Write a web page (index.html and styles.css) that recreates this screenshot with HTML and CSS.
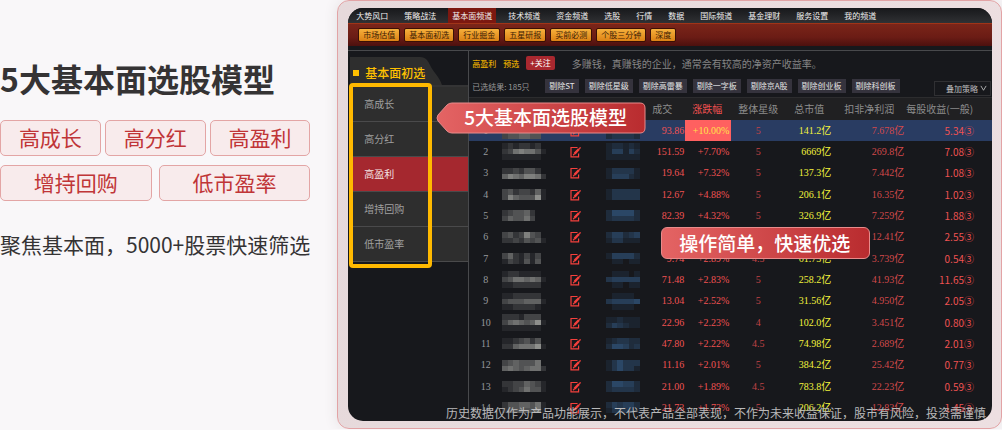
FILE: index.html
```html
<!DOCTYPE html>
<html lang="zh-CN">
<head>
<meta charset="utf-8">
<title>5大基本面选股模型</title>
<link rel="stylesheet" href="styles.css">
</head>
<body>
<main class="page">
  <section class="intro">
    <h1 class="intro-title">5大基本面选股模型</h1>
    <ul class="tags">
      <li class="tag">高成长</li>
      <li class="tag">高分红</li>
      <li class="tag">高盈利</li>
    </ul>
    <ul class="tags tags-wide">
      <li class="tag">增持回购</li>
      <li class="tag">低市盈率</li>
    </ul>
    <p class="intro-text">聚焦基本面，5000+股票快速筛选</p>
  </section>

  <section class="frame">
    <div class="app">
      <nav class="topnav">
        <a href="#">大势风口</a>
        <a href="#">策略战法</a>
        <a href="#" class="current">基本面频道</a>
        <a href="#">技术频道</a>
        <a href="#">资金频道</a>
        <a href="#">选股</a>
        <a href="#">行情</a>
        <a href="#">数据</a>
        <a href="#">国际频道</a>
        <a href="#">基金理财</a>
        <a href="#">服务设置</a>
        <a href="#">我的频道</a>
      </nav>
      <div class="subnav">
        <button>市场估值</button>
        <button>基本面初选</button>
        <button>行业掘金</button>
        <button>五星研报</button>
        <button>买前必测</button>
        <button>个股三分钟</button>
        <button>深度</button>
      </div>
      <div class="workspace">
        <aside class="sidebar">
          <div class="side-head">
            <svg class="side-tab" viewBox="0 0 92 28" aria-hidden="true"><path d="M0 0H70C76 0 78 4 80 8C83 15 89 19 92 28H0Z"/></svg>
            <span class="side-title">基本面初选</span>
          </div>
          <ul class="side-list">
            <li><a href="#">高成长</a></li>
            <li><a href="#">高分红</a></li>
            <li><a href="#" class="current">高盈利</a></li>
            <li><a href="#">增持回购</a></li>
            <li><a href="#">低市盈率</a></li>
          </ul>
        </aside>
        <div class="results">
          <div class="strategy">
            <strong>高盈利</strong>
            <strong>预选</strong>
            <button class="follow">+关注</button>
            <span class="desc">多赚钱，真赚钱的企业，通常会有较高的净资产收益率。</span>
          </div>
          <div class="filters">
            <span class="count">已选结果: 185只</span>
            <button>剔除ST</button>
            <button>剔除低星级</button>
            <button>剔除高雷暴</button>
            <button>剔除一字板</button>
            <button>剔除京A股</button>
            <button>剔除创业板</button>
            <button>剔除科创板</button>
            <button class="overlay-btn">叠加策略<svg viewBox="0 0 8 8" aria-hidden="true"><path d="M1 1L4 6L7 1"/></svg></button>
          </div>
          <table class="stocks">
            <colgroup>
              <col class="c-num"><col class="c-name"><col class="c-edit"><col class="c-tag"><col class="c-price"><col class="c-change"><col class="c-star"><col class="c-value"><col class="c-profit"><col class="c-eps">
            </colgroup>
            <thead>
              <tr><th></th><th></th><th></th><th></th><th class="h-price">成交</th><th class="h-change">涨跌幅</th><th class="h-star">整体星级</th><th class="h-value">总市值</th><th class="h-profit">扣非净利润</th><th class="h-eps">每股收益(一般)</th></tr>
            </thead>
            <tbody id="rows"></tbody>
          </table>
        </div>
      </div>
      <p class="disclaimer">历史数据仅作为产品功能展示，不代表产品全部表现，不作为未来收益保证，股市有风险，投资需谨慎</p>
      <div class="callout callout-models">
        <svg viewBox="0 0 210 32" preserveAspectRatio="none" aria-hidden="true">
          <defs><linearGradient id="red"><stop offset="0" stop-color="#e46464"/><stop offset="1" stop-color="#b92c2f"/></linearGradient></defs>
          <path d="M16 1Q13 1 11 3L2 13Q0 16 2 19L11 29Q13 31 16 31H204Q209 31 209 26V6Q209 1 204 1Z" fill="url(#red)" stroke="#e88b8b"/>
        </svg>
        <span>5大基本面选股模型</span>
      </div>
      <div class="callout callout-easy"><span>操作简单，快速优选</span></div>
    </div>
  </section>
</main>
<script src="rows.js"></script>
</body>
</html>
```
FILE: styles.css
```css
*, *::before, *::after { box-sizing: border-box; }
body {
  margin: 0;
  background: #f9f7f9;
  font-family: "Noto Sans CJK SC", sans-serif;
  color: #353334;
}
ul { list-style: none; margin: 0; padding: 0; }
p, h1 { margin: 0; }
a { color: inherit; text-decoration: none; }
button { font: inherit; color: inherit; border: 0; padding: 0; margin: 0; white-space: nowrap; }

.page { display: flex; align-items: flex-start; }
.intro { flex: 0 0 337px; padding: 58px 27px 0 0; }
.intro-title { font-size: 32px; line-height: 40px; font-weight: 700; white-space: nowrap; }
.tags { display: flex; gap: 4px; margin-top: 22px; }
.tags-wide { gap: 7px; margin-top: 9px; }
.tag {
  flex: 1;
  height: 36px;
  border: 1px solid #e3a5a5;
  border-radius: 5px;
  background: #f8ebec;
  color: #c03537;
  font-size: 21px;
  line-height: 32px;
  text-align: center;
}
.intro-text { margin-top: 28px; font-size: 21px; line-height: 30px; white-space: nowrap; }

.frame {
  flex: 1;
  min-width: 0;
  padding: 7px 9px 7px 10px;
  border: 1px solid #e2a3a5;
  border-radius: 12px;
  background: linear-gradient(100deg, #e6d9db, #eddfe1);
  box-shadow: 0 0 14px #e4e0e2;
}
.app {
  position: relative;
  overflow: hidden;
  padding-bottom: 3px;
  border-radius: 15px;
  background: #17181c;
  color: #999;
  font-size: 8px;
}
.topnav {
  display: flex;
  gap: 16px;
  padding-left: 8px;
  height: 15px;
  line-height: 15px;
  background: linear-gradient(#17181b, #303134);
  color: #f0f0f0;
  white-space: nowrap;
}
.topnav .current { background: #7c1810; margin: 0 -4px; padding: 0 4px; }
.subnav {
  display: flex;
  align-items: center;
  gap: 4px;
  height: 23px;
  padding: 0 10px;
  border-top: 1px solid #a03418;
  background: linear-gradient(#7b2519, #6b1c15 60%, #4c100e);
}
.subnav button {
  height: 14px;
  padding: 0 4px;
  line-height: 12px;
  border: 1px solid #3a1006;
  border-radius: 2px;
  background: linear-gradient(#f6b03c, #dc8215);
  color: #3c1b04;
}
.workspace { display: flex; margin-top: 4px; border-top: 1px solid #48494c; }
.sidebar { flex: 0 0 121px; padding: 6px 0 0 2px; border-right: 1px solid #48494c; }
.side-head { position: relative; height: 28px; }
.side-tab { display: block; width: 92px; height: 28px; fill: #2e2e2e; }
.side-title {
  position: absolute;
  left: 3px;
  top: 7px;
  display: flex;
  align-items: center;
  gap: 6px;
  font-size: 12px;
  line-height: 18px;
  font-weight: 500;
  color: #ffc000;
}
.side-title::before { content: ""; width: 6px; height: 6px; background: #ffc000; }
.side-list { position: relative; border-top: 2px solid #343435; }
.side-list a {
  display: block;
  height: 35px;
  padding-left: 14px;
  line-height: 34px;
  font-size: 10px;
  background: #2e2e2e;
  border-bottom: 1px solid #4a4a4b;
  color: #a0a0a0;
}
.side-list .current { background: #a5282f; color: #f4e4e4; }
.side-list::after {
  content: "";
  position: absolute;
  left: -1px;
  top: -4px;
  bottom: -6px;
  width: 83px;
  border: 4px solid #ffb900;
  border-radius: 4px;
}
.results { flex: 1; min-width: 0; }
.strategy { display: flex; align-items: center; gap: 7px; height: 24px; padding-left: 3px; color: #e2a800; }
.strategy strong { font-weight: 500; }
.follow { height: 14px; padding: 0 4px; line-height: 14px; border-radius: 2px; background: #a8282f; color: #fff; }
.desc { margin-left: 10px; font-size: 10px; color: #858585; white-space: nowrap; }
.filters {
  display: flex;
  align-items: center;
  gap: 6px;
  height: 23px;
  padding: 0 1px 0 3px;
  border-bottom: 1px solid #2c2c2e;
}
.filters .count { flex: 0 0 67px; white-space: nowrap; }
.filters button { height: 14px; padding: 0 4px; line-height: 14px; background: #35333d; color: #e4e4e4; }
.filters .overlay-btn { margin: 4px 0 0 auto; height: 15px; padding: 0 3px 0 11px; border: 1px solid #303033; background: #17181c; color: #bbb; }
.overlay-btn svg { width: 7px; height: 7px; margin-left: 2px; fill: none; stroke: #bbb; }

.stocks { width: 100%; table-layout: fixed; border-collapse: collapse; }
.stocks th, .stocks td { padding: 0; white-space: nowrap; text-align: right; }
.stocks th { height: 22px; background: #202022; font-size: 10px; line-height: 20px; font-weight: 400; color: #8c8c8c; }
.c-num { width: 33px; }
.c-name { width: 68px; }
.c-edit { width: 36px; }
.c-tag { width: 40px; }
.c-price { width: 39px; }
.c-change { width: 46px; }
.c-star { width: 54px; }
.c-value { width: 48px; }
.c-profit { width: 73px; }
.stocks .h-price { padding-right: 13px; }
.stocks .h-change { padding-right: 9px; color: #f05050; }
.stocks .h-star { text-align: center; }
.stocks .h-value { padding-right: 9px; }
.stocks .h-profit { padding-right: 12px; }
.stocks .h-eps { padding-right: 20px; }
.stocks td { height: 21px; font: 10px/20px "Liberation Serif", "Noto Sans CJK SC", serif; color: #f05252; }
.stocks tr:nth-child(3n) td { height: 22px; }
.stocks .num { text-align: center; color: #96989c; }
.stocks .pic { text-align: left; line-height: 0; vertical-align: middle; }
.stocks .pic svg { display: block; }
.stocks .star { text-align: center; color: #c04346; }
.stocks .price { padding-right: 1px; }
.stocks .change, .stocks .value, .stocks .profit { padding-right: 2px; }
.stocks .value { color: #f2f23c; }
.stocks .profit { color: #d2494b; }
.stocks .eps { padding-right: 18px; font-family: "Noto Sans CJK SC", sans-serif; }
.stocks .first td { background: #293c62; }
.stocks .first .change { background: #ff6060; color: #ffe24a; }
.mosaic-name { width: 44px; }
.mosaic-tag { width: 34px; }
.lines-2 { height: 11px; }
.lines-3 { height: 17px; }
.edit { width: 11px; height: 12px; fill: none; stroke: #f5403c; }

.disclaimer {
  position: absolute;
  right: 6px;
  bottom: 0;
  font-size: 12px;
  line-height: 16px;
  color: #b9b9ba;
  white-space: nowrap;
}
.callout {
  position: absolute;
  height: 32px;
  line-height: 30px;
  font-size: 19px;
  font-weight: 500;
  color: #fff;
  white-space: nowrap;
}
.callout-models { left: 88px; top: 94px; width: 210px; padding-left: 28px; }
.callout-models svg { position: absolute; left: 0; top: 0; width: 210px; height: 32px; }
.callout-models span { position: relative; }
.callout-easy {
  left: 313px;
  top: 219px;
  padding: 0 19px 0 17px;
  border: 1px solid #e88b8b;
  border-radius: 6px;
  background: linear-gradient(90deg, #e46464, #b92c2f);
}
```
FILE: rows.js
```js
// price, change, star, market value, profit, EPS
const stocks = [
  ["93.86", "+10.00%", "5", "141.2", "7.678", "5.34"],
  ["151.59", "+7.70%", "5", "6669", "269.8", "7.08"],
  ["19.64", "+7.32%", "5", "137.3", "7.442", "1.08"],
  ["12.67", "+4.88%", "5", "206.1", "16.35", "1.02"],
  ["82.39", "+4.32%", "5", "326.9", "7.259", "1.88"],
  ["36.28", "+3.10%", "5", "190.5", "12.41", "2.55"],
  ["9.74", "+2.89%", "4.5", "61.73", "3.739", "0.54"],
  ["71.48", "+2.83%", "5", "258.2", "41.93", "11.65"],
  ["13.04", "+2.52%", "5", "31.56", "4.950", "2.05"],
  ["22.96", "+2.23%", "4", "102.0", "3.451", "0.80"],
  ["47.80", "+2.22%", "4.5", "74.98", "2.689", "2.01"],
  ["11.16", "+2.01%", "5", "384.2", "25.42", "0.77"],
  ["21.00", "+1.89%", "4.5", "783.8", "22.23", "0.59"],
  ["21.73", "+1.73%", "5", "206.2", "12.83", "1.45"]
];

// Brightness of each masked cell, 0-9, one string per line of cells
const names = [
  ["00000000", "00000000", "34455440"], ["12122120", "23676641", "11111110"],
  ["22324420", "57657762"], ["34233251", "37544481"],
  ["23445200", "35446300"], ["34237430", "22324341"],
  ["35213130", "13214140"], ["12211110", "34665651", "11222220"],
  ["11222220", "34445551", "11222210"], ["22213330", "35654581", "11111110"],
  ["11234240", "22566681"], ["34544460", "56545662"],
  ["22335431", "12346441"], ["24455461", "24454461"]
];
const tags = [
  ["000000", "000000", "233332"], ["122121", "144142", "111111"],
  ["133331", "144421"], ["133333", "133333"],
  ["255552", "233332"], ["244234", "133111"],
  ["144442", "011011"], ["011101", "344444", "011011"],
  ["011110", "344445", "011110"], ["112111", "243211"],
  ["123322", "255423"], ["135333", "135331"],
  ["255442", "233332"], ["243442", "133331"]
];

const grey = v => `rgb(${22 + v * 15},${23 + v * 15},${28 + v * 14})`;
const blue = v => `rgb(${23 + v * 4},${26 + v * 9},${32 + v * 14})`;

function mosaic(lines, color, cls) {
  const cells = lines.flatMap((line, y) => [...line].map((v, x) =>
    v === "0" ? "" : `<rect x="${x}" y="${y}" width="1" height="1" fill="${color(+v)}"/>`));
  return `<svg class="${cls} lines-${lines.length}" viewBox="0 0 ${lines[0].length} ${lines.length}" preserveAspectRatio="none" shape-rendering="crispEdges" aria-hidden="true">${cells.join("")}</svg>`;
}

const edit = `<svg class="edit" viewBox="0 0 11 12" aria-hidden="true"><path d="M7.5 1.5H1V10.8H8.6V7.5" stroke-width="1.2"/><path d="M4.6 7.6L9 3" stroke-width="2.4"/><path d="M9.2 2.8L10.6 1.4M3.2 9.2L4.8 7.4" stroke-width="1.3"/></svg>`;

document.getElementById("rows").innerHTML = stocks.map((s, i) => `
  <tr class="${i === 0 ? "first" : ""}">
    <td class="num">${i + 1}</td>
    <td class="pic">${mosaic(names[i], grey, "mosaic-name")}</td>
    <td class="pic">${edit}</td>
    <td class="pic">${mosaic(tags[i], blue, "mosaic-tag")}</td>
    <td class="price">${s[0]}</td>
    <td class="change">${s[1]}</td>
    <td class="star">${s[2]}</td>
    <td class="value">${s[3]}亿</td>
    <td class="profit">${s[4]}亿</td>
    <td class="eps">${s[5]}③</td>
  </tr>`).join("");
```
